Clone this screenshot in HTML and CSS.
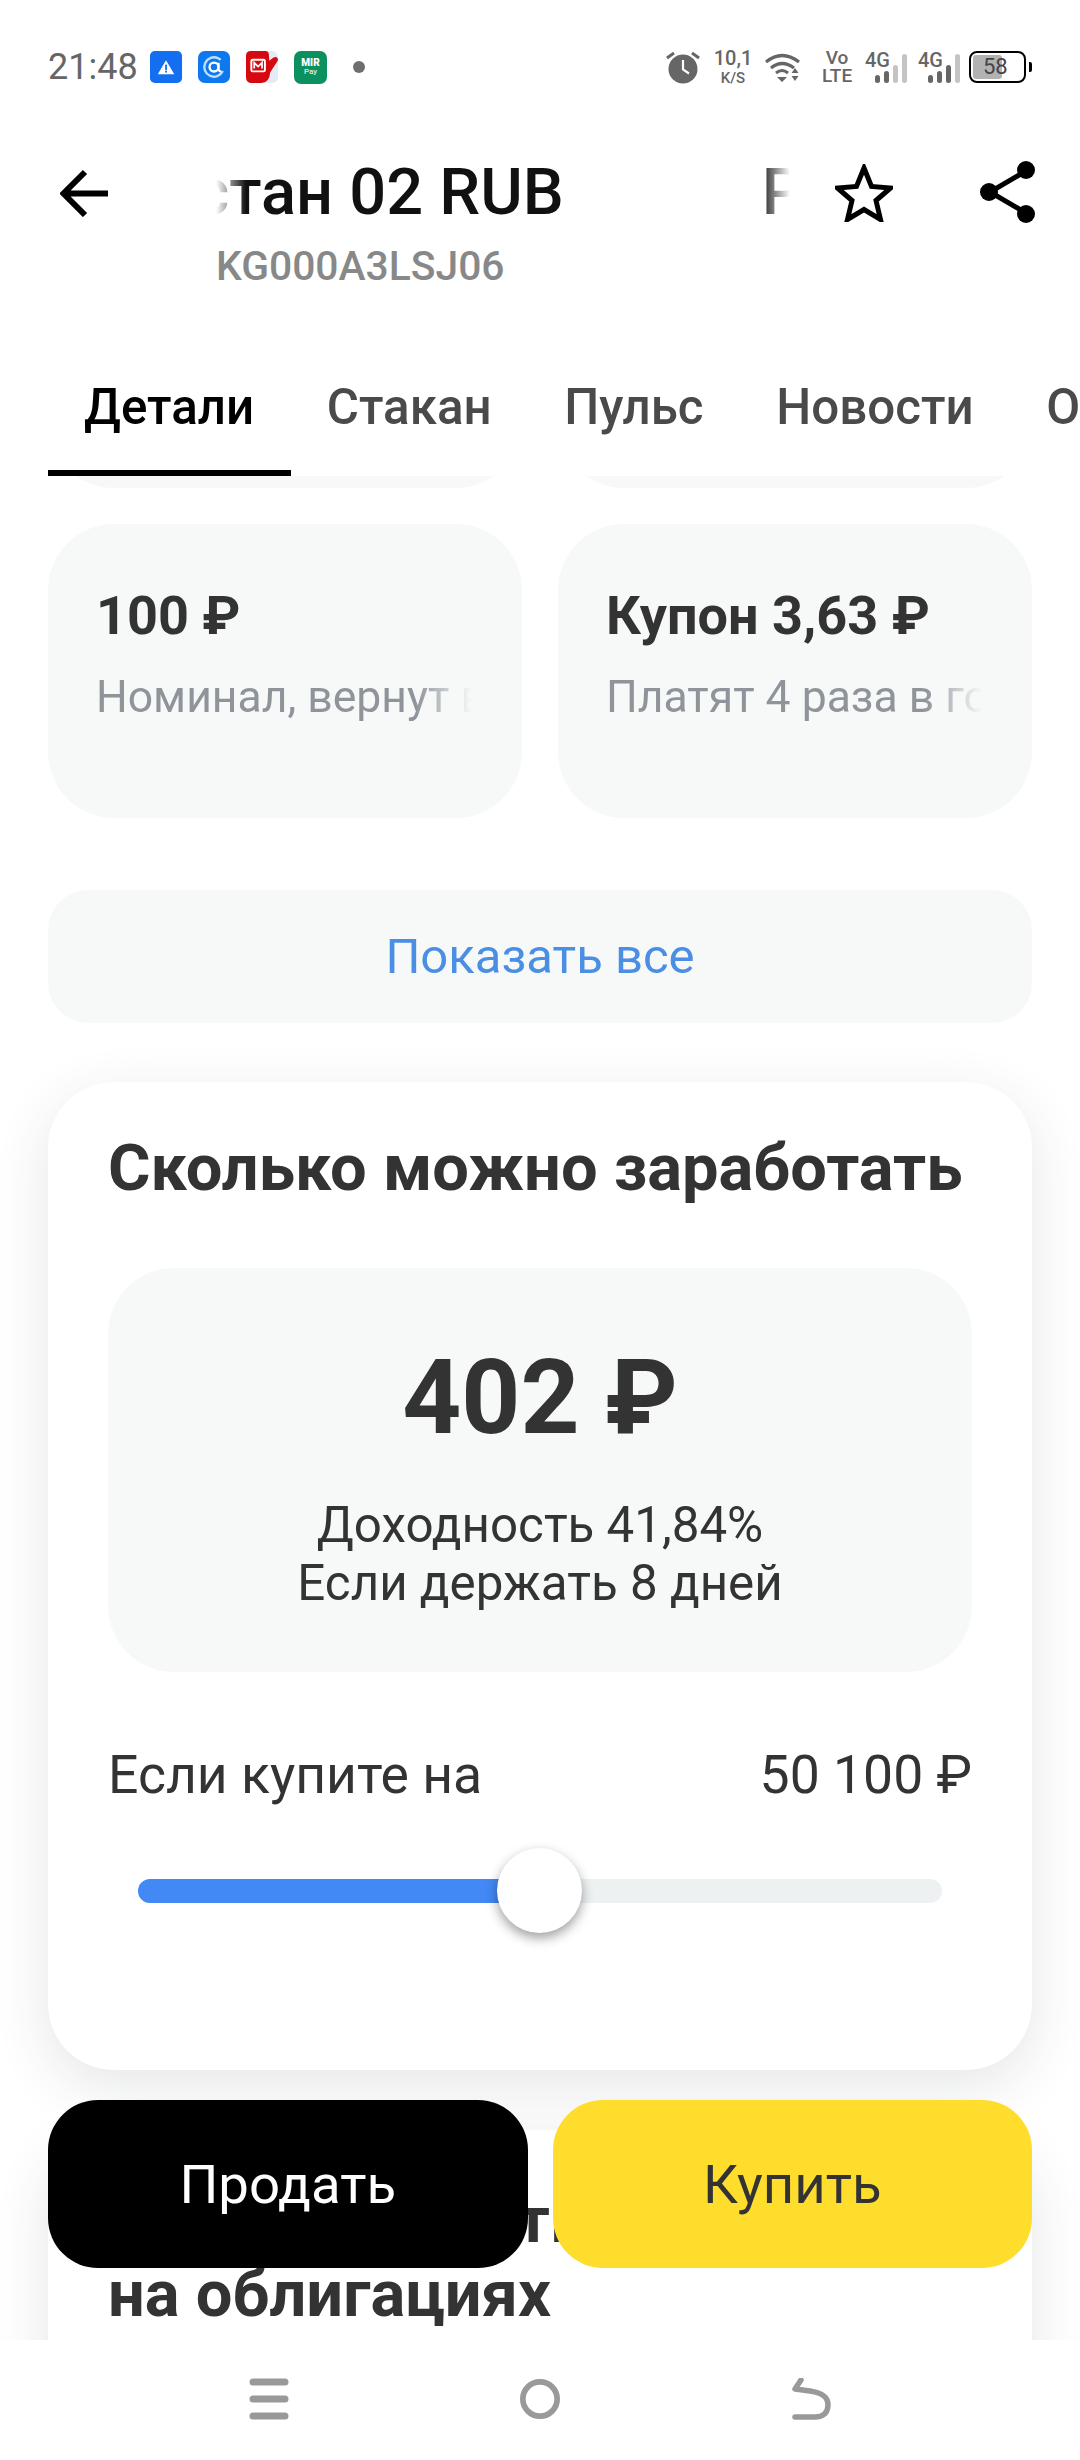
FILE: index.html
```html
<!DOCTYPE html>
<html lang="ru">
<head>
<meta charset="utf-8">
<title>Облигация</title>
<link rel="stylesheet" href="styles.css">
</head>
<body>
<div class="phone">
  <div class="status">
    <span class="time">21:48</span>
    <div class="apps">
      <svg class="app" viewBox="0 0 34 34"><rect width="33" height="33" rx="5" fill="#136ef0"/><path d="M16.5 9.5 25 24H8z" fill="#fff"/><rect x="15.6" y="14" width="1.9" height="5.5" fill="#136ef0"/><rect x="15.6" y="20.3" width="1.9" height="1.9" fill="#136ef0"/></svg>
      <svg class="app" viewBox="0 0 34 34"><rect width="33" height="33" rx="7" fill="#0f78ee"/><circle cx="16.5" cy="16.5" r="10" fill="none" stroke="#bfe0ff" stroke-width="2.4" stroke-dasharray="50 13" transform="rotate(25 16.5 16.5)"/><circle cx="16.5" cy="16.5" r="4.6" fill="none" stroke="#fff" stroke-width="2.4"/><path d="M21.2 12v6.5q0 2.5 2.6 2.5" fill="none" stroke="#fff" stroke-width="2.2"/></svg>
      <svg class="app" viewBox="0 0 34 34"><rect x="10" width="23" height="33" rx="6" fill="#e4ebf5"/><path d="M5 0h15q3 0 3.500 3l.5 7 4-3q3-2 4.500 .5 1 2-.5 3.500L25 22q-1 11-9 11H6q-6 0-6-6V5q0-5 5-5z" fill="#d5090f"/><rect x="5.500" y="9" width="14" height="12" rx="1.500" fill="none" stroke="#fff" stroke-width="2"/><path d="M8.500 18v-6l4 4 4-4v6" fill="none" stroke="#fff" stroke-width="1.800"/></svg>
      <div class="app mir"><span class="mir-a">MIR</span><span class="mir-b">Pay</span></div>
      <span class="dot"></span>
    </div>
    <div class="sys">
      <svg class="alarm" viewBox="0 0 34 34"><circle cx="17" cy="19" r="14.500" fill="#666"/><path d="M17 10v9.500l6 4" fill="none" stroke="#fff" stroke-width="2.200"/><path d="M1 8l7-5M33 8l-7-5" stroke="#666" stroke-width="3"/></svg>
      <div class="speed"><span class="speed-a">10,1</span><span class="speed-b">K/S</span></div>
      <svg class="wifi" viewBox="0 0 37 30"><path d="M1 10Q17-3 34 10" fill="none" stroke="#666" stroke-width="3.200"/><path d="M6 16q11-9 23 0" fill="none" stroke="#666" stroke-width="3.200"/><path d="M11 21q6-5 12 0" fill="none" stroke="#666" stroke-width="3"/><path d="M12 25h10l-5 5zM30 16l3.500 5h-7zM30 29l-3.500-5h7z" fill="#666"/></svg>
      <div class="volte"><span>Vo</span><span>LTE</span></div>
      <div class="net">
        <span class="g">4G</span>
        <div class="bars"><i class="b1"></i><i class="b2"></i><i class="b3 off"></i><i class="b4 off"></i></div>
      </div>
      <div class="net">
        <span class="g">4G</span>
        <div class="bars"><i class="b1"></i><i class="b2"></i><i class="b3"></i><i class="b4 off"></i></div>
      </div>
      <div class="batt"><div class="batt-body"><div class="batt-fill"></div><span class="batt-num">58</span></div><div class="batt-nub"></div></div>
    </div>
  </div>

  <header class="head">
    <svg class="back" viewBox="0 0 48 48"><path d="M48 24.500H4M25 3 3.500 24.500 25 46" fill="none" stroke="#000" stroke-width="6"/></svg>
    <div class="titles">
      <div class="marquee">
        <div class="track"><span>Республика Кыргызстан 02 RUB</span><span>Республика Кыргызстан 02 RUB</span></div>
      </div>
      <div class="isin">KG000A3LSJ06</div>
    </div>
    <svg class="star" viewBox="0 0 58 58"><path d="M29 4l7.500 18.500 19 1.500-14.500 12.500 4.500 19L29 45.500 12.500 55.500l4.500-19L2.500 24l19-1.500z" fill="none" stroke="#000" stroke-width="5"/></svg>
    <svg class="share" viewBox="0 0 56 62"><path d="M46 10 10 31l36 21" fill="none" stroke="#000" stroke-width="5"/><circle cx="46" cy="9" r="9" fill="#000"/><circle cx="9" cy="31" r="9" fill="#000"/><circle cx="46" cy="53" r="9" fill="#000"/></svg>
  </header>

  <nav class="tabs">
    <span class="tab on">Детали</span>
    <span class="tab">Стакан</span>
    <span class="tab">Пульс</span>
    <span class="tab">Новости</span>
    <span class="tab">Операции</span>
  </nav>

  <main class="scroll">
    <div class="pair first">
      <div class="tile"></div>
      <div class="tile"></div>
    </div>
    <div class="pair">
      <div class="tile">
        <div class="tile-val">100 ₽</div>
        <div class="tile-sub">Номинал, вернут в конце</div>
      </div>
      <div class="tile">
        <div class="tile-val">Купон 3,63 ₽</div>
        <div class="tile-sub">Платят 4 раза в год</div>
      </div>
    </div>
    <div class="showall">Показать все</div>

    <section class="card calc">
      <h2 class="card-title">Сколько можно заработать</h2>
      <div class="result">
        <div class="sum">402 ₽</div>
        <div class="note">Доходность 41,84%</div>
        <div class="note">Если держать 8 дней</div>
      </div>
      <div class="line"><span>Если купите на</span><span>50 100 ₽</span></div>
      <div class="slider">
        <div class="fill"></div>
        <div class="thumb"></div>
      </div>
    </section>

    <section class="card next">
      <h2 class="card-title">Как заработать<br>на облигациях</h2>
    </section>
  </main>

  <div class="actions">
    <div class="btn sell">Продать</div>
    <div class="btn buy">Купить</div>
  </div>

  <footer class="nav">
    <svg viewBox="0 0 40 42" class="nav-i"><path d="M4 4h32M4 21h32M4 38h32" stroke="#999" stroke-width="7" stroke-linecap="round"/></svg>
    <svg viewBox="0 0 42 42" class="nav-i"><circle cx="21" cy="21" r="18" fill="none" stroke="#999" stroke-width="6"/></svg>
    <svg viewBox="0 0 40 42" class="nav-i"><path d="M10 2 4 11l15 2c14 2 18 7 18 14 0 8-5 12-13 12H4" fill="none" stroke="#999" stroke-width="5.500" stroke-linecap="round" stroke-linejoin="round"/></svg>
  </footer>
</div>
</body>
</html>
```

FILE: styles.css
```css
* { box-sizing: border-box; }
html, body { margin: 0; padding: 0; background: #fff; }
body { font-family: Roboto, "Noto Sans", sans-serif; color: #333; }
.phone { width: 1080px; height: 2460px; position: relative; overflow: hidden; display: flex; flex-direction: column; background: #fff; }

.status { height: 134px; padding: 0 48px; display: flex; align-items: center; }
.time { font-size: 36px; color: #666; width: 102px; }
.apps { display: flex; align-items: center; gap: 15px; }
.app { width: 33px; height: 33px; display: block; }
.mir { background: #0b9160; border-radius: 7px; display: flex; flex-direction: column; align-items: center; justify-content: center; color: #fff; line-height: 1; }
.mir-a { font-size: 10px; font-weight: 900; }
.mir-b { font-size: 8px; }
.dot { width: 12px; height: 12px; border-radius: 50%; background: #6e6e6e; margin-left: 11px; }
.sys { margin-left: auto; display: flex; align-items: center; }
.alarm { width: 34px; height: 34px; margin-right: 15px; }
.speed { width: 36px; display: flex; flex-direction: column; align-items: center; color: #666; font-weight: 500; line-height: 1; }
.speed-a { font-size: 20px; }
.speed-b { font-size: 15px; margin-top: 3px; }
.wifi { width: 37px; height: 30px; margin-left: 14px; }
.volte { width: 30px; margin-left: 20px; display: flex; flex-direction: column; align-items: center; color: #666; font-weight: 500; font-size: 19px; line-height: 18px; }
.net { position: relative; width: 42px; height: 32px; margin-left: 13px; }
.net + .net { margin-left: 11px; }
.g { position: absolute; left: 0; top: -1px; font-size: 20px; font-weight: 500; color: #666; line-height: 20px; }
.bars { position: absolute; left: 10px; right: 0; bottom: 0; display: flex; align-items: flex-end; gap: 4px; }
.bars i { width: 5px; background: #666; border-radius: 3px; display: block; }
.b1 { height: 8px; }
.b2 { height: 12px; }
.b3 { height: 18px; }
.b4 { height: 29px; }
.bars .off { background: #c4c4c4; }
.batt { display: flex; align-items: center; margin-left: 9px; }
.batt-body { position: relative; width: 57px; height: 32px; border: 2.500px solid #000; border-radius: 8px; padding: 2px; }
.batt-fill { width: 29px; height: 100%; background: #b2b2b2; border-radius: 3px; }
.batt-num { position: absolute; left: 12px; top: 0; font-size: 22px; line-height: 27px; color: #444; }
.batt-nub { width: 3px; height: 10px; background: #000; margin-left: 3px; border-radius: 0 2px 2px 0; }

.head { height: 156px; padding: 0 0 0 60px; display: flex; align-items: flex-start; }
.back { width: 48px; height: 48px; margin-top: 35px; flex: none; }
.titles { width: 574px; margin-left: 108px; padding-top: 20px; flex: none; }
.marquee { height: 76px; overflow: hidden; -webkit-mask-image: linear-gradient(90deg, transparent 0, #000 30px, #000 544px, transparent 574px); mask-image: linear-gradient(90deg, transparent 0, #000 30px, #000 544px, transparent 574px); }
.track { display: flex; gap: 198px; width: max-content; margin-left: -641px; font-size: 65px; line-height: 76px; font-weight: 500; color: #111; }
.isin { font-size: 40.800px; line-height: 48px; font-weight: 500; color: #888; margin-top: 12px; }
.star { width: 58px; height: 58px; margin: 30px 0 0 45px; flex: none; }
.share { width: 56px; height: 62px; margin: 27px 0 0 87px; flex: none; }

.tabs { height: 186px; padding: 0 0 0 48px; display: flex; align-items: flex-end; overflow: hidden; flex: none; }
.tab { flex: none; height: 96px; line-height: 54px; padding: 0 36.700px 0 36px; font-size: 49.300px; font-weight: 500; color: #4a4a4a; border-bottom: 6px solid transparent; }
.tab.on { color: #000; border-bottom-color: #000; }

.scroll { flex: 1; overflow: hidden; padding: 0 48px; min-height: 0; }
.pair { display: flex; gap: 36px; margin-bottom: 36px; }
.pair.first { margin-top: -282px; }
.tile { flex: 1 1 0; min-width: 0; height: 294px; background: #f7f9f9; border-radius: 66px; padding: 59px 50px 0 48px; }
.tile-val { font-size: 54px; line-height: 66px; font-weight: 700; color: #333; white-space: nowrap; }
.tile-sub { font-size: 44.500px; line-height: 56px; color: #8e949a; margin-top: 20px; white-space: nowrap; overflow: hidden; -webkit-mask-image: linear-gradient(90deg, #000 85%, transparent 100%); mask-image: linear-gradient(90deg, #000 85%, transparent 100%); }
.showall { height: 133px; margin-top: 72px; background: #f7f9f9; border-radius: 40px; display: flex; align-items: center; justify-content: center; font-size: 49px; color: #4a8fe3; }

.card { background: #fff; border-radius: 66px; box-shadow: 0 16px 56px rgba(40, 50, 60, .12); padding: 0 60px; }
.calc { height: 988px; margin-top: 59px; padding-top: 47px; }
.card-title { margin: 0; font-size: 65px; line-height: 78px; font-weight: 700; color: #333; }
.result { height: 404px; margin-top: 61px; background: #f7f9f9; border-radius: 66px; padding-top: 69px; text-align: center; }
.sum { font-size: 103px; line-height: 122px; font-weight: 700; color: #333; margin-bottom: 37px; }
.note { font-size: 49.300px; line-height: 58px; color: #333; }
.line { display: flex; justify-content: space-between; margin-top: 70px; font-size: 53.500px; line-height: 66px; color: #333; }
.slider { position: relative; height: 24px; margin: 71px 30px 0; background: #eef1f2; border-radius: 12px; }
.fill { width: 52%; height: 100%; background: #4289f5; border-radius: 12px 0 0 12px; }
.thumb { position: absolute; left: 359px; top: -31px; width: 85px; height: 85px; border-radius: 50%; background: #fff; box-shadow: 0 5px 12px rgba(0, 0, 0, .38); }
.next { margin-top: 60px; height: 500px; padding-top: 53px; }
.next .card-title { line-height: 74px; }

.actions { position: absolute; left: 48px; right: 48px; top: 2100px; display: flex; gap: 25px; }
.btn { flex: 1 1 0; height: 168px; border-radius: 50px; display: flex; align-items: center; justify-content: center; font-size: 54.500px; }
.sell { background: #000; color: #fff; }
.buy { background: #ffdd2d; color: #333; }

.nav { height: 120px; background: #fff; display: grid; grid-template-columns: repeat(3, 271px); justify-content: center; justify-items: center; padding-top: 38px; flex: none; position: relative; }
.nav-i { width: 40px; height: 42px; display: block; }
```
